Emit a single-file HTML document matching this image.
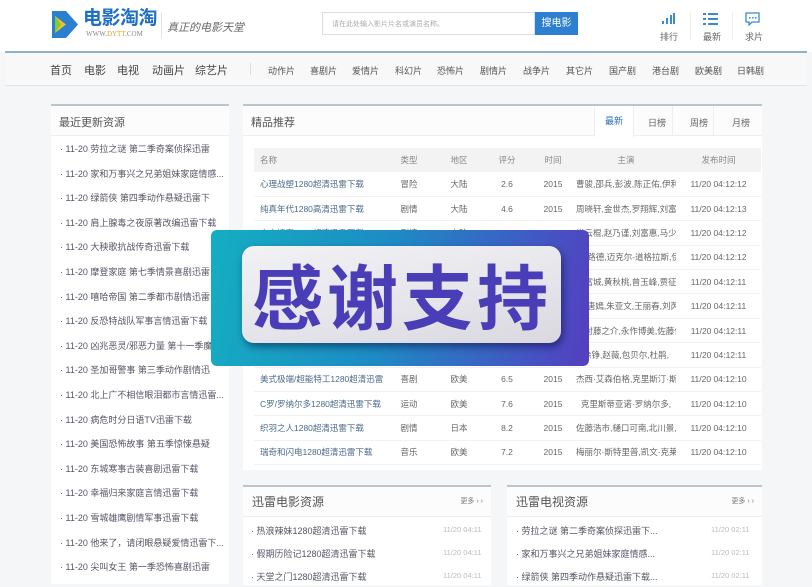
<!DOCTYPE html>
<html><head><meta charset="utf-8">
<style>
*{margin:0;padding:0;box-sizing:border-box}
body{width:812px;height:581px;overflow:hidden;background:#f5f6f7;font-family:"Liberation Sans","Noto Sans CJK SC",sans-serif;color:#555;position:relative}
.a{position:absolute;white-space:nowrap}
.hdr{position:absolute;left:0;top:0;width:812px;height:52px;background:#fff}
.nav{position:absolute;left:5px;top:54px;width:802px;height:32px;background:#f8f8f8;border-bottom:1px solid #e3e3e3}
.panel{position:absolute;background:#fff;border-top:2px solid #b9c6cc}
.ph{position:absolute;left:0;top:0;right:0;height:30px;border-bottom:1px solid #eee;background:#fcfcfc}
.li{position:absolute;font-size:9px;color:#556;white-space:nowrap}
td{font-size:8.5px;color:#666;height:24.4px;border-bottom:1px solid #f2f2f2;white-space:nowrap;overflow:hidden;text-align:center}
td.n{text-align:left;color:#4a6a8a;padding-left:6px}
th{font-size:8.5px;color:#888;font-weight:normal;height:24px;background:#f3f3f3;text-align:center}
</style></head><body>
<div class="hdr"></div>
<svg class="a" style="left:52px;top:11px" width="26" height="27" viewBox="0 0 26 27"><polygon points="0,0 14,0 26,13.5 14,27 0,27" fill="#2a7fd0"/><polygon points="3,5 3,22 14,13.5" fill="#f2c220"/><polygon points="3,5 9,13.5 3,22" fill="#7ccb3a"/></svg>
<div class="a" style="left:83px;top:9px;font-size:19px;line-height:20px;font-weight:bold;color:#1f6fc2;letter-spacing:-0.5px">电影淘淘</div>
<div class="a" style="left:86px;top:30px;font-size:7px;line-height:8px;color:#888;font-family:'Liberation Serif',serif">WWW.<span style="color:#e6a020">DYTT</span>.COM</div>
<div class="a" style="left:161px;top:12px;width:1px;height:26px;background:#e3e3e3"></div>
<div class="a" style="left:167px;top:19px;font-size:11px;color:#666;font-style:italic">真正的电影天堂</div>
<div class="a" style="left:322px;top:12px;width:213px;height:23px;border:1px solid #ddd;background:#fff"></div>
<div class="a" style="left:332px;top:19px;font-size:7px;color:#aaa">请在此处输入影片片名或演员名称。</div>
<div class="a" style="left:535px;top:12px;width:43px;height:23px;background:#2d7fcf;color:#fff;font-size:10px;line-height:23px;text-align:center">搜电影</div>
<svg class="a" style="left:661px;top:13px" width="14" height="12"><rect x="1" y="8" width="2" height="3" fill="#3a8ad0"/><rect x="5" y="5" width="2" height="6" fill="#3a8ad0"/><rect x="9" y="2" width="2" height="9" fill="#3a8ad0"/><rect x="12" y="0" width="2" height="11" fill="#3a8ad0"/></svg>
<svg class="a" style="left:703px;top:12px" width="15" height="13"><g fill="#3a8ad0"><rect x="0" y="1" width="3" height="2"/><rect x="5" y="1" width="10" height="2"/><rect x="0" y="6" width="3" height="2"/><rect x="5" y="6" width="10" height="2"/><rect x="0" y="11" width="3" height="2"/><rect x="5" y="11" width="10" height="2"/></g></svg>
<svg class="a" style="left:745px;top:12px" width="15" height="14"><path d="M1 1h13v9H7l-3 3v-3H1z" fill="none" stroke="#3a8ad0" stroke-width="1.3"/><g fill="#3a8ad0"><rect x="4" y="5" width="1.5" height="1.5"/><rect x="7" y="5" width="1.5" height="1.5"/><rect x="10" y="5" width="1.5" height="1.5"/></g></svg>
<div class="a" style="left:690px;top:12px;width:1px;height:28px;background:#eee"></div>
<div class="a" style="left:732px;top:12px;width:1px;height:28px;background:#eee"></div>
<div class="a" style="left:660px;top:30px;font-size:9px;color:#666">排行</div>
<div class="a" style="left:703px;top:30px;font-size:9px;color:#666">最新</div>
<div class="a" style="left:745px;top:30px;font-size:9px;color:#666">求片</div>
<div class="a" style="left:5px;top:51px;width:802px;height:2px;background:#8fb1c9"></div>
<div class="nav"></div>
<div class="a" style="top:62px;left:50px;font-size:11px;color:#444">
<span style="position:absolute;left:0">首页</span><span style="position:absolute;left:34px">电影</span><span style="position:absolute;left:67px">电视</span><span style="position:absolute;left:102px">动画片</span><span style="position:absolute;left:145px">综艺片</span></div>
<div class="a" style="left:250px;top:63px;width:1px;height:12px;background:#ddd"></div>
<div class="a" style="top:64px;left:0;font-size:9px;color:#555">
<span class="a" style="left:268px">动作片</span><span class="a" style="left:310px">喜剧片</span><span class="a" style="left:352px">爱情片</span><span class="a" style="left:395px">科幻片</span><span class="a" style="left:437px">恐怖片</span><span class="a" style="left:480px">剧情片</span><span class="a" style="left:523px">战争片</span><span class="a" style="left:566px">其它片</span><span class="a" style="left:609px">国产剧</span><span class="a" style="left:652px">港台剧</span><span class="a" style="left:695px">欧美剧</span><span class="a" style="left:737px">日韩剧</span></div>
<div class="panel" style="left:51px;top:104px;width:178px;height:480px">
<div class="ph"><div class="a" style="left:8px;top:8px;font-size:11px;color:#555">最近更新资源</div></div>
</div>
<div class="a" style="left:60px;top:142px">
<div class="li" style="top:0">· 11-20 劳拉之谜 第二季奇案侦探迅雷</div>
<div class="li" style="top:24.6px">· 11-20 家和万事兴之兄弟姐妹家庭情感...</div>
<div class="li" style="top:49.2px">· 11-20 绿箭侠 第四季动作悬疑迅雷下</div>
<div class="li" style="top:73.8px">· 11-20 肩上腺毒之夜原著改编迅雷下载</div>
<div class="li" style="top:98.4px">· 11-20 大秧歌抗战传奇迅雷下载</div>
<div class="li" style="top:123px">· 11-20 摩登家庭 第七季情景喜剧迅雷</div>
<div class="li" style="top:147.6px">· 11-20 嘻哈帝国 第二季都市剧情迅雷</div>
<div class="li" style="top:172.2px">· 11-20 反恐特战队军事言情迅雷下载</div>
<div class="li" style="top:196.8px">· 11-20 凶兆恶灵/邪恶力量 第十一季魔...</div>
<div class="li" style="top:221.4px">· 11-20 圣加哥警事 第三季动作剧情迅</div>
<div class="li" style="top:246px">· 11-20 北上广不相信眼泪都市言情迅雷...</div>
<div class="li" style="top:270.6px">· 11-20 病危时分日语TV迅雷下载</div>
<div class="li" style="top:295.2px">· 11-20 美国恐怖故事 第五季惊悚悬疑</div>
<div class="li" style="top:319.8px">· 11-20 东城寒事古装喜剧迅雷下载</div>
<div class="li" style="top:344.4px">· 11-20 幸福归来家庭言情迅雷下载</div>
<div class="li" style="top:369px">· 11-20 雪城雄鹰剧情军事迅雷下载</div>
<div class="li" style="top:393.6px">· 11-20 他来了，请闭眼悬疑爱情迅雷下...</div>
<div class="li" style="top:418.2px">· 11-20 尖叫女王 第一季恐怖喜剧迅雷</div>
</div>
<div class="panel" style="left:243px;top:104px;width:519px;height:366px">
<div class="ph"><div class="a" style="left:8px;top:8px;font-size:11px;color:#555">精品推荐</div></div>
<div class="a" style="left:351px;top:0;width:40px;height:31px;background:#fff;border-left:1px solid #eee;border-right:1px solid #eee;font-size:9px;color:#2a6fb0;text-align:center;line-height:30px">最新</div>
<div class="a" style="left:405px;top:10px;font-size:9px;color:#666">日榜</div>
<div class="a" style="left:429px;top:0;width:1px;height:30px;background:#eee"></div>
<div class="a" style="left:447px;top:10px;font-size:9px;color:#666">周榜</div>
<div class="a" style="left:470px;top:0;width:1px;height:30px;background:#eee"></div>
<div class="a" style="left:489px;top:10px;font-size:9px;color:#666">月榜</div>
<table class="a" style="left:11px;top:42px;width:507px;border-collapse:collapse;table-layout:fixed">
<colgroup><col style="width:130px"><col style="width:50px"><col style="width:50px"><col style="width:46px"><col style="width:46px"><col style="width:100px"><col style="width:85px"></colgroup>
<tr><th style="text-align:left;padding-left:6px">名称</th><th>类型</th><th>地区</th><th>评分</th><th>时间</th><th>主演</th><th>发布时间</th></tr>
<tr><td class="n">心理战塑1280超清迅雷下载</td><td>冒险</td><td>大陆</td><td>2.6</td><td>2015</td><td>曹骏,邵兵,彭波,陈正佑,伊利亚尔</td><td>11/20 04:12:12</td></tr>
<tr><td class="n">纯真年代1280高清迅雷下载</td><td>剧情</td><td>大陆</td><td>4.6</td><td>2015</td><td>周晓轩,金世杰,罗翔辉,刘富惠,严</td><td>11/20 04:12:13</td></tr>
<tr><td class="n">人肉搜索1280超清迅雷下载</td><td>剧情</td><td>大陆</td><td>2.8</td><td>2015</td><td>肖云棍,赵乃谨,刘富惠,马少骅,</td><td>11/20 04:12:12</td></tr>
<tr><td class="n">我的特工爷爷1280超清</td><td>动作</td><td>大陆</td><td>6.1</td><td>2015</td><td>罗-路德,迈克尔-道格拉斯,伊万</td><td>11/20 04:12:12</td></tr>
<tr><td class="n">道士下山1280超清迅雷下载</td><td>动作</td><td>大陆</td><td>5.4</td><td>2015</td><td>郭富城,黄秋桃,曾玉峰,贾征宇,李</td><td>11/20 04:12:11</td></tr>
<tr><td class="n">谋杀似水年华1280超清</td><td>剧情</td><td>大陆</td><td>5.2</td><td>2015</td><td>富,唐嫣,朱亚文,王丽春,刘芮麟</td><td>11/20 04:12:11</td></tr>
<tr><td class="n">解忧杂货店1280超清</td><td>剧情</td><td>日本</td><td>7.0</td><td>2015</td><td>左衬藤之介,永作博美,佐藤仁美,</td><td>11/20 04:12:11</td></tr>
<tr><td class="n">港囧1280超清迅雷下载</td><td>喜剧</td><td>大陆</td><td>5.7</td><td>2015</td><td>徐铮,赵薇,包贝尔,杜鹃,</td><td>11/20 04:12:11</td></tr>
<tr><td class="n">美式极端/超能特工1280超清迅雷</td><td>喜剧</td><td>欧美</td><td>6.5</td><td>2015</td><td>杰西·艾森伯格,克里斯汀·斯图尔</td><td>11/20 04:12:10</td></tr>
<tr><td class="n">C罗/罗纳尔多1280超清迅雷下载</td><td>运动</td><td>欧美</td><td>7.6</td><td>2015</td><td>克里斯蒂亚诺·罗纳尔多,</td><td>11/20 04:12:10</td></tr>
<tr><td class="n">织羽之人1280超清迅雷下载</td><td>剧情</td><td>日本</td><td>8.2</td><td>2015</td><td>佐藤浩市,樋口可南,北川景,野村周</td><td>11/20 04:12:10</td></tr>
<tr><td class="n">瑞奇和闪电1280超清迅雷下载</td><td>音乐</td><td>欧美</td><td>7.2</td><td>2015</td><td>梅丽尔·斯特里普,凯文·克莱恩,麦</td><td>11/20 04:12:10</td></tr>
</table>
</div>
<div class="panel" style="left:243px;top:485px;width:248px;height:100px">
<div class="ph"><div class="a" style="left:9px;top:6px;font-size:12px;color:#555">迅雷电影资源</div><div class="a" style="right:8px;top:9px;font-size:7px;color:#777">更多 › ›</div></div>
</div>
<div class="panel" style="left:507px;top:485px;width:255px;height:100px">
<div class="ph"><div class="a" style="left:9px;top:6px;font-size:12px;color:#555">迅雷电视资源</div><div class="a" style="right:8px;top:9px;font-size:7px;color:#777">更多 › ›</div></div>
</div>
<div class="a" style="left:251px;top:524px">
<div class="li" style="top:0">· 热浪辣妹1280超清迅雷下载</div>
<div class="li" style="top:23px">· 假期历险记1280超清迅雷下载</div>
<div class="li" style="top:46px">· 天堂之门1280超清迅雷下载</div></div>
<div class="a" style="left:443px;top:518px;font-size:7.5px;color:#bbb;line-height:23px">11/20 04:11<br>11/20 04:11<br>11/20 04:11</div>
<div class="a" style="left:516px;top:524px">
<div class="li" style="top:0">· 劳拉之谜 第二季奇案侦探迅雷下...</div>
<div class="li" style="top:23px">· 家和万事兴之兄弟姐妹家庭情感...</div>
<div class="li" style="top:46px">· 绿箭侠 第四季动作悬疑迅雷下载...</div></div>
<div class="a" style="left:711px;top:518px;font-size:7.5px;color:#bbb;line-height:23px">11/20 02:11<br>11/20 02:11<br>11/20 02:11</div>
<div class="a" style="left:211px;top:230px;width:378px;height:136px;border-radius:6px;background:linear-gradient(100deg,#14aec2 0%,#1d8cc4 45%,#3a62c4 75%,#553ec0 100%)"></div>
<div class="a" style="left:242px;top:246px;width:319px;height:97px;border-radius:12px;background:linear-gradient(170deg,#f2f2f5 0%,#e4e4ea 60%,#d8d8de 100%);box-shadow:2px 4px 8px rgba(0,0,40,.45)"></div>
<div class="a" style="left:252px;top:254px;font-size:71px;line-height:80px;font-weight:bold;color:#4a3db8;letter-spacing:4px;font-family:'Noto Sans CJK SC',sans-serif">感谢支持</div>
</body></html>
